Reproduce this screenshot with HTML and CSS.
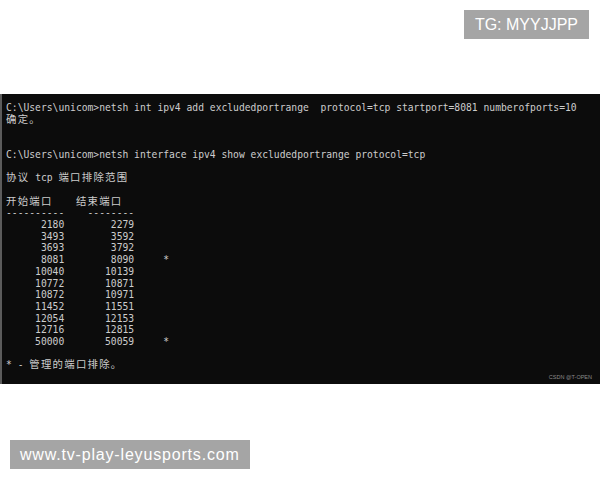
FILE: index.html
```html
<!DOCTYPE html>
<html>
<head>
<meta charset="utf-8">
<link rel="stylesheet" href="styles.css">
</head>
<body>
<div class="top"><span class="tag">TG: MYYJJPP</span></div>
<div class="term">
<pre class="out">C:\Users\unicom&gt;netsh int ipv4 add excludedportrange  protocol=tcp startport=8081 numberofports=10
<span class="cj">确定。</span>


C:\Users\unicom&gt;netsh interface ipv4 show excludedportrange protocol=tcp

<span class="cj">协议</span> tcp <span class="cj">端口排除范围</span>

<span class="cj">开始端口</span>    <span class="cj">结束端口</span>
----------    --------
      2180        2279
      3493        3592
      3693        3792
      8081        8090     *
     10040       10139
     10772       10871
     10872       10971
     11452       11551
     12054       12153
     12716       12815
     50000       50059     *

* - <span class="cj">管理的端口排除。</span></pre>
<span class="mark">CSDN @T-OPEN</span>
</div>
<div class="bottom"><span class="url">www.tv-play-leyusports.com</span></div>
</body>
</html>
```
FILE: styles.css
```css
html, body {
  margin: 0;
  padding: 0;
  background: #ffffff;
  width: 600px;
  height: 480px;
  overflow: hidden;
}
body {
  display: flex;
  flex-direction: column;
  font-family: "Liberation Sans", Arial, sans-serif;
}
.top {
  display: flex;
  justify-content: flex-end;
  padding: 10px 11px 0 0;
}
.tag {
  background: #a5a5a5;
  color: #ffffff;
  font-size: 16px;
  line-height: 29px;
  height: 29px;
  padding: 0 11px;
}
.term {
  position: relative;
  margin-top: 55px;
  height: 290px;
  background: #0c0c0c;
  border-left: 2px solid #5c5c5c;
  box-sizing: border-box;
}
.out {
  margin: 0;
  padding: 8px 0 0 4px;
  font-family: "DejaVu Sans Mono", "Liberation Mono", monospace;
  font-size: 9.68px;
  line-height: 11.7px;
  color: #cccccc;
}
.cj {
  font-family: "Noto Sans CJK SC", sans-serif;
  font-size: 10.4px;
  line-height: 0;
  letter-spacing: 1.26px;
}
.mark {
  position: absolute;
  right: 8px;
  bottom: 4px;
  font-size: 5.5px;
  color: #8a8a8a;
  font-family: "Liberation Sans", Arial, sans-serif;
}
.bottom {
  display: flex;
  margin-top: 56px;
  padding-left: 10px;
}
.url {
  background: #a5a5a5;
  color: #ffffff;
  font-size: 16px;
  line-height: 29px;
  height: 29px;
  padding: 0 10px;
  letter-spacing: 0.82px;
}
```
